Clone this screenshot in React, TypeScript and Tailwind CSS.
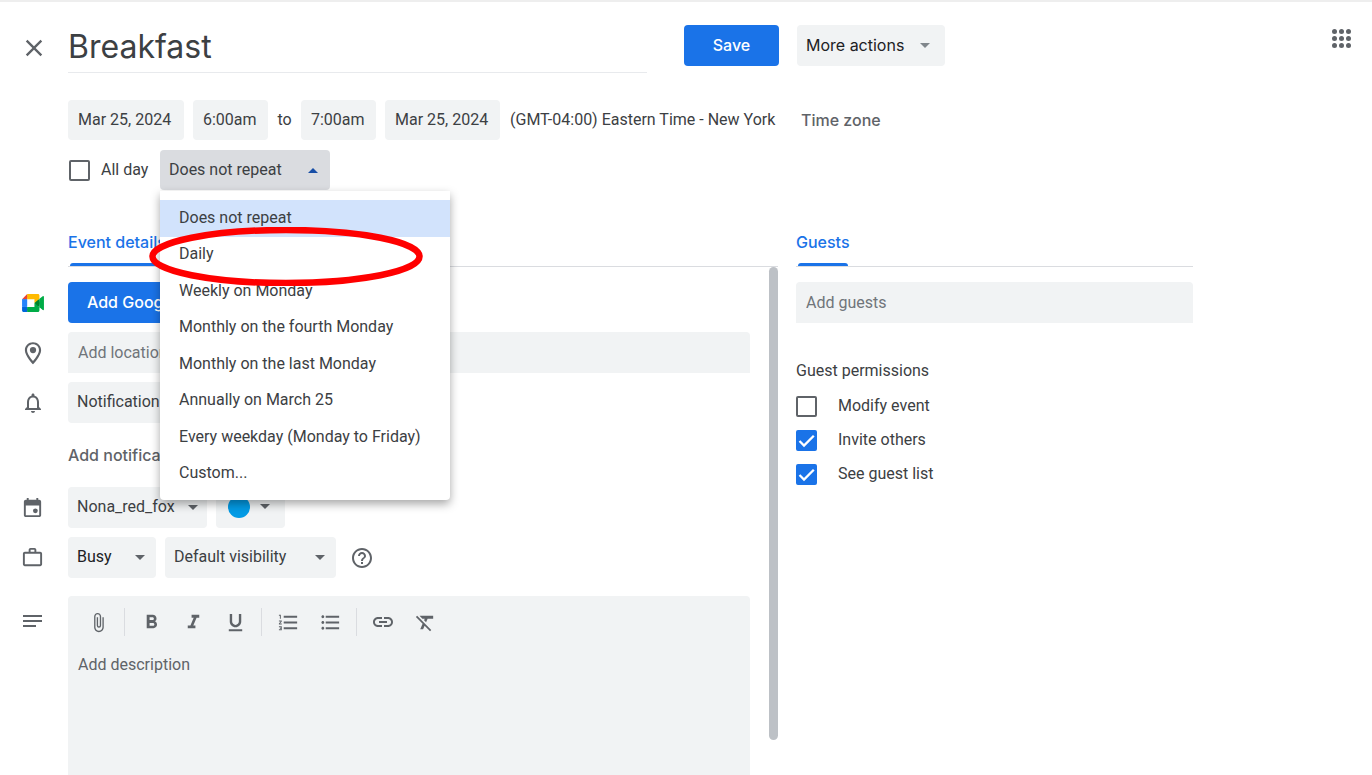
import React, { useState } from 'react';
import {
  MdAttachFile,
  MdClose,
  MdFormatBold,
  MdFormatClear,
  MdFormatItalic,
  MdFormatListBulleted,
  MdFormatListNumbered,
  MdFormatUnderlined,
  MdHelpOutline,
  MdLink,
  MdNotificationsNone,
} from 'react-icons/md';

const repeatOptions = [
  'Does not repeat',
  'Daily',
  'Weekly on Monday',
  'Monthly on the fourth Monday',
  'Monthly on the last Monday',
  'Annually on March 25',
  'Every weekday (Monday to Friday)',
  'Custom...',
];

const toolbarGroups = [
  [{ label: 'Attach file', icon: <MdAttachFile size={21} /> }],
  [
    { label: 'Bold', icon: <MdFormatBold size={23} /> },
    { label: 'Italic', icon: <MdFormatItalic size={23} /> },
    { label: 'Underline', icon: <MdFormatUnderlined size={23} /> },
  ],
  [
    { label: 'Numbered list', icon: <MdFormatListNumbered size={23} /> },
    { label: 'Bulleted list', icon: <MdFormatListBulleted size={23} /> },
  ],
  [
    { label: 'Insert link', icon: <MdLink size={24} /> },
    { label: 'Remove formatting', icon: <MdFormatClear size={23} /> },
  ],
];

const Arrow: React.FC<{ className?: string }> = ({ className }) => (
  <svg viewBox="0 0 10 5" className={`w-[10px] h-[5px] fill-current pointer-events-none ${className ?? ''}`} aria-hidden="true">
    <path d="M0 0h10L5 5z" />
  </svg>
);

const MeetLogo = () => (
  <svg viewBox="0 0 87.5 72" className="w-[22px] h-[18px]" aria-hidden="true">
    <path fill="#00832d" d="M49.5 36l8.53 9.75 11.47 7.33 2-17.02-2-16.64-11.69 6.44z" />
    <path fill="#0066da" d="M0 51.5V66c0 3.315 2.685 6 6 6h14.5l3-10.96-3-9.54-9.95-3z" />
    <path fill="#e94235" d="M20.5 0L0 20.5l10.55 3 9.95-3 2.95-9.41z" />
    <path fill="#2684fc" d="M20.5 20.5H0v31h20.5z" />
    <path fill="#00ac47" d="M82.6 8.68L69.5 19.42v33.66l13.16 10.79c1.97 1.54 4.85.135 4.85-2.37V11c0-2.535-2.945-3.925-4.91-2.32zM49.5 36v15.5h-29V72h43c3.315 0 6-2.685 6-6V53.08z" />
    <path fill="#ffba00" d="M63.5 0h-43v20.5h29V36l20-16.57V6c0-3.315-2.685-6-6-6z" />
  </svg>
);

const PlaceIcon = () => (
  <svg viewBox="0 0 24 24" className="w-[26px] h-[26px] fill-current" aria-hidden="true">
    <path d="M12 2C8 2 4.500 5.100 4.500 9.400c0 5.300 7.500 13 7.500 13s7.500-7.700 7.500-13C19.500 5.100 16 2 12 2zm0 17.300c-2.500-2.900-5.500-7-5.500-9.900C6.500 6.200 9 4 12 4s5.500 2.200 5.500 5.400c0 2.900-3 7-5.500 9.900z" />
    <circle cx="12" cy="9.300" r="2.900" />
  </svg>
);

const CalendarIcon = () => (
  <svg viewBox="0 0 24 24" className="w-[23px] h-[23px] fill-current" aria-hidden="true">
    <path d="M19 4h-1V2h-2v2H8V2H6v2H5c-1.100 0-2 .9-2 2v14c0 1.100.9 2 2 2h14c1.100 0 2-.9 2-2V6c0-1.100-.9-2-2-2zm0 16H5V10h14v10z" />
    <circle cx="15" cy="15.500" r="2.500" />
  </svg>
);

const BriefcaseIcon = () => (
  <svg viewBox="0 0 24 24" className="w-[23px] h-[23px] fill-current" aria-hidden="true">
    <path d="M20 6h-4V4c0-1.110-.89-2-2-2h-4c-1.110 0-2 .89-2 2v2H4c-1.110 0-2 .89-2 2v11c0 1.110.89 2 2 2h16c1.110 0 2-.89 2-2V8c0-1.110-.89-2-2-2zM10 4h4v2h-4V4zm10 15H4V8h16v11z" />
  </svg>
);

const NotesIcon = () => (
  <svg viewBox="0 0 19 12" className="w-[19px] h-[12px] fill-current" aria-hidden="true">
    <path d="M0 0h19v2H0zM0 5h19v2H0zM0 10h13v2H0z" />
  </svg>
);

const Check: React.FC<{ id: string; label: string; defaultChecked?: boolean; className: string }> = ({
  id,
  label,
  defaultChecked,
  className,
}) => (
  <div className={`flex items-center ${className}`}>
    <span className="grid shrink-0">
      <input
        id={id}
        type="checkbox"
        defaultChecked={defaultChecked}
        className="peer [grid-area:1/1] appearance-none w-[21px] h-[21px] rounded-xs border-2 border-[#5f6368] bg-white checked:border-[#1a73e8] checked:bg-[#1a73e8]"
      />
      <svg
        viewBox="0 0 21 21"
        className="[grid-area:1/1] w-[21px] h-[21px] invisible peer-checked:visible pointer-events-none"
        aria-hidden="true"
      >
        <path d="M3.500 11l4.500 4.500L17.800 5.700" fill="none" stroke="#fff" strokeWidth="2.300" />
      </svg>
    </span>
    <label htmlFor={id}>{label}</label>
  </div>
);

const Dropdown: React.FC<{ label: string; value: string; width: string; arrow: string }> = ({
  label,
  value,
  width,
  arrow,
}) => (
  <div className={`relative h-[41px] shrink-0 ${width}`}>
    <select
      aria-label={label}
      className="appearance-none w-full h-full rounded bg-[#f1f3f4] pl-[9px] pb-[2px]"
      defaultValue={value}
    >
      <option>{value}</option>
    </select>
    <Arrow className={`absolute top-[18px] text-[#5f6368] ${arrow}`} />
  </div>
);

const Tab: React.FC<{ label: string }> = ({ label }) => (
  <div className="border-b border-[#dadce0] flex">
    <button className="h-[48px] pt-[12px] flex flex-col justify-between font-['Inter',sans-serif] font-medium text-[#1a73e8]">
      {label}
      <span className="mx-[2px] h-[3px] self-stretch rounded-t bg-[#1a73e8]" />
    </button>
  </div>
);

// One line of the form: leading icon in the gutter, fields beside it
const Row: React.FC<{ icon?: React.ReactNode; children: React.ReactNode }> = ({ icon, children }) => (
  <div className="flex items-center min-h-[41px]">
    <div className="w-[68px] shrink-0 flex items-center pr-[3px] justify-center text-[#5f6368]">{icon}</div>
    {children}
  </div>
);

const App: React.FC = () => {
  const [repeat, setRepeat] = useState(repeatOptions[0]);
  const [menuOpen, setMenuOpen] = useState(true);

  return (
    <div className="min-h-screen flex flex-col overflow-hidden bg-white border-t-2 border-[#eeeeee] font-['Roboto',sans-serif] text-base text-[#3c4043]">
      <header className="flex items-start pt-[23px]">
        <div className="flex-1 min-w-0 grid grid-cols-[minmax(0,779fr)_minmax(0,396fr)] gap-x-[18px]">
          <div className="flex items-start">
            <button aria-label="Close" className="w-[68px] h-[45px] shrink-0 flex items-center justify-center text-[#5f6368]">
              <MdClose size={28} />
            </button>
            <input
              aria-label="Title"
              defaultValue="Breakfast"
              className="flex-1 min-w-0 h-[48px] mr-[37px] pb-[4px] border-b border-[#e8eaed] font-['Inter',sans-serif] text-[32px] text-[#3c4043] outline-none"
            />
            <button className="w-[95px] h-[41px] shrink-0 rounded bg-[#1a73e8] text-white font-['Inter',sans-serif] font-medium pb-[2px]">
              Save
            </button>
          </div>
          <div>
            <button className="w-[148px] h-[41px] rounded bg-[#f1f3f4] flex items-center justify-between pl-[9px] pr-[15px] pb-[1px] font-['Inter',sans-serif] text-[#202124] whitespace-nowrap">
              More actions
              <Arrow className="text-[#80868b]" />
            </button>
          </div>
        </div>
        <div className="w-[179px] shrink-0 flex justify-end pr-[20px] pt-[3px]">
          <button aria-label="Google apps" className="text-[#5f6368]">
            <svg viewBox="0 0 21 21" className="w-[21px] h-[21px] fill-current" aria-hidden="true">
              {[3.5, 10.5, 17.5].map((y) => [3.5, 10.5, 17.5].map((x) => <circle key={`${x}-${y}`} cx={x} cy={y} r="2.500" />))}
            </svg>
          </button>
        </div>
      </header>

      <div className="pl-[68px] pt-[27px] flex items-center whitespace-nowrap">
        <input aria-label="Start date" defaultValue="Mar 25, 2024" className="w-[116px] h-[40px] rounded bg-[#f1f3f4] px-[10px] pb-[2px]" />
        <input aria-label="Start time" defaultValue="6:00am" className="w-[75px] h-[40px] ml-[9px] rounded bg-[#f1f3f4] px-[10px] pb-[2px]" />
        <span className="w-[33px] text-center">to</span>
        <input aria-label="End time" defaultValue="7:00am" className="w-[75px] h-[40px] rounded bg-[#f1f3f4] px-[10px] pb-[2px]" />
        <input aria-label="End date" defaultValue="Mar 25, 2024" className="w-[115px] h-[40px] ml-[9px] rounded bg-[#f1f3f4] px-[10px] pb-[2px]" />
        <span className="w-[283px] pl-[10px]">(GMT-04:00) Eastern Time - New York</span>
        <button className="ml-[18px] font-['Inter',sans-serif] font-medium text-[#5f6368]">Time zone</button>
      </div>

      <div className="pl-[69px] pt-[10px] flex items-center">
        <Check id="all-day" label="All day" className="gap-[11px] w-[91px] whitespace-nowrap" />
        <div className="relative">
          <button
            aria-haspopup="listbox"
            aria-expanded={menuOpen}
            onClick={() => setMenuOpen(!menuOpen)}
            className="w-[170px] h-[40px] rounded bg-[#dadce0] flex items-center justify-between pl-[9px] pr-[12px] whitespace-nowrap"
          >
            {repeat}
            <Arrow className="text-[#174ea6] rotate-180" />
          </button>
          {menuOpen && (
            <div className="absolute left-0 top-[41px] z-10 w-[290px]">
              <ul
                role="listbox"
                aria-label="Repeat"
                className="h-[309px] pt-[9px] pb-[8px] flex flex-col rounded-b bg-white shadow-[0_4px_10px_rgba(0,0,0,0.35)]"
              >
                {repeatOptions.map((option) => (
                  <li
                    key={option}
                    role="option"
                    aria-selected={option === repeat}
                    onClick={() => {
                      setRepeat(option);
                      setMenuOpen(false);
                    }}
                    className="flex-1 flex items-center pl-[19px] pb-[1px] whitespace-nowrap cursor-pointer aria-selected:bg-[#d2e3fc]"
                  >
                    {option}
                  </li>
                ))}
              </ul>
              {/* hand-drawn highlight around the second option */}
              <svg
                viewBox="0 0 274 59"
                className="absolute left-[-11px] top-[36px] w-[274px] h-[59px] pointer-events-none"
                aria-hidden="true"
              >
                <ellipse cx="137" cy="29.500" rx="133.500" ry="26.500" fill="none" stroke="#ff0000" strokeWidth="6.500" />
              </svg>
            </div>
          )}
        </div>
      </div>

      <main className="flex-1 mt-[28px] mr-[179px] grid grid-cols-[minmax(0,778fr)_minmax(0,397fr)] gap-x-[18px]">
        <section className="flex flex-col">
          <div className="pl-[68px]">
            <Tab label="Event details" />
          </div>

          <div className="flex-1 flex">
            <div className="flex-1 min-w-0 pt-[15px] flex flex-col gap-[9px]">
              <Row icon={<MeetLogo />}>
                <button className="h-[41px] rounded bg-[#1a73e8] text-white font-['Inter',sans-serif] font-medium px-[19px] pb-[1px] whitespace-nowrap">
                  Add Google Meet video conferencing
                </button>
              </Row>
              <Row icon={<PlaceIcon />}>
                <input
                  aria-label="Location"
                  placeholder="Add location"
                  className="flex-1 min-w-0 h-[41px] rounded-t bg-[#f1f3f4] px-[10px] pb-[1px] placeholder:text-[#70757a]"
                />
              </Row>
              <Row icon={<MdNotificationsNone size={24} />}>
                <Dropdown label="Notification type" value="Notification" width="w-[140px]" arrow="right-[12px]" />
              </Row>
              <div className="h-[46px] pl-[68px] flex items-center">
                <button className="font-['Inter',sans-serif] font-medium text-[#5f6368]">Add notification</button>
              </div>
              <Row icon={<CalendarIcon />}>
                <Dropdown label="Calendar" value="Nona_red_fox" width="w-[139px]" arrow="right-[9px]" />
                <button
                  aria-label="Event color"
                  className="ml-[9px] w-[69px] h-[41px] rounded bg-[#f1f3f4] flex items-center justify-between pl-[12px] pr-[15px] pb-[2px] text-[#5f6368]"
                >
                  <span className="w-[22px] h-[22px] rounded-full bg-[#039be5]" />
                  <Arrow />
                </button>
              </Row>
              <Row icon={<BriefcaseIcon />}>
                <Dropdown label="Availability" value="Busy" width="w-[88px] text-[#202124]" arrow="right-[11px]" />
                <div className="w-[9px]" />
                <Dropdown label="Visibility" value="Default visibility" width="w-[171px]" arrow="right-[11px]" />
                <button aria-label="About visibility" className="ml-[14px] text-[#5f6368]">
                  <MdHelpOutline size={24} />
                </button>
              </Row>
              <div className="flex-1 mt-[9px] flex">
                <div className="w-[68px] shrink-0 pr-[3px] pt-[19px] flex justify-center text-[#5f6368]">
                  <NotesIcon />
                </div>
                <div className="flex-1 min-w-0 flex flex-col rounded-t bg-[#f1f3f4]">
                  <div className="flex items-center h-[52px] pl-[9px] text-[#5f6368]">
                    {toolbarGroups.map((group, i) => (
                      <React.Fragment key={group[0].label}>
                        {i > 0 && <span className="w-px h-[28px] mx-[5px] bg-[#dadce0]" />}
                        {group.map((tool) => (
                          <button key={tool.label} aria-label={tool.label} className="w-[42px] h-[42px] flex items-center justify-center">
                            {tool.icon}
                          </button>
                        ))}
                      </React.Fragment>
                    ))}
                  </div>
                  <textarea
                    aria-label="Description"
                    placeholder="Add description"
                    className="flex-1 px-[10px] pt-[5px] resize-none outline-none placeholder:text-[#5f6368]"
                  />
                </div>
              </div>
            </div>
            <div className="w-[28px] shrink-0 flex justify-end">
              <div className="w-[9px] h-[473px] rounded-full bg-[#bdc1c6]" />
            </div>
          </div>
        </section>

        <section>
          <Tab label="Guests" />
          <input
            aria-label="Guests"
            placeholder="Add guests"
            className="mt-[15px] w-full h-[41px] rounded-t bg-[#f1f3f4] px-[10px] pb-[1px] placeholder:text-[#70757a]"
          />
          <h2 className="mt-[36px]">Guest permissions</h2>
          <div className="mt-[6px]">
            <Check id="modify" label="Modify event" className="gap-[21px] h-[34px]" />
            <Check id="invite" label="Invite others" defaultChecked className="gap-[21px] h-[34px]" />
            <Check id="see-list" label="See guest list" defaultChecked className="gap-[21px] h-[34px]" />
          </div>
        </section>
      </main>
    </div>
  );
};

export default App;
